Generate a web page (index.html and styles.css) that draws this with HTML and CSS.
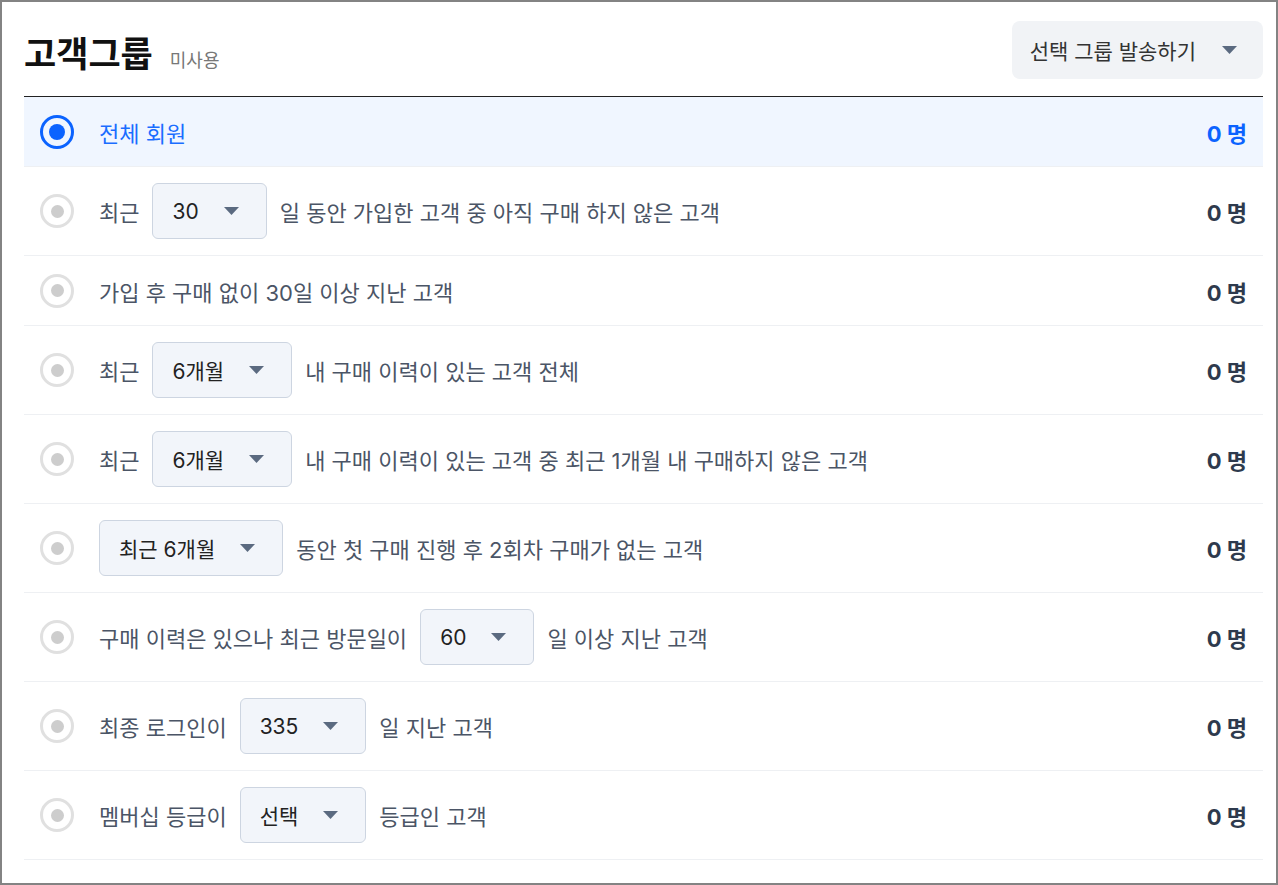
FILE: index.html
```html
<!DOCTYPE html>
<html lang="ko">
<head>
  <meta charset="utf-8">
  <title>고객그룹</title>
  <link rel="stylesheet" href="styles.css">
</head>
<body>
  <div class="frame">
    <div class="header">
      <div class="title-wrap">
        <h1>고객그룹</h1>
        <span class="sub">미사용</span>
      </div>
      <button class="send-btn">
        선택 그룹 발송하기
        <svg class="caret" width="15" height="8" viewBox="0 0 15 8"><path d="M0 0H15L7.5 8Z"/></svg>
      </button>
    </div>

    <ul class="group-list">
      <li class="group-row active">
        <span class="radio"></span>
        <div class="cond">전체 회원</div>
        <span class="count">0 명</span>
      </li>
      <li class="group-row">
        <span class="radio"></span>
        <div class="cond">
          최근
          <span class="select">30 <svg class="caret" width="15" height="8" viewBox="0 0 15 8"><path d="M0 0H15L7.5 8Z"/></svg></span>
          일 동안 가입한 고객 중 아직 구매 하지 않은 고객
        </div>
        <span class="count">0 명</span>
      </li>
      <li class="group-row">
        <span class="radio"></span>
        <div class="cond">가입 후 구매 없이 30일 이상 지난 고객</div>
        <span class="count">0 명</span>
      </li>
      <li class="group-row">
        <span class="radio"></span>
        <div class="cond">
          최근
          <span class="select">6개월 <svg class="caret" width="15" height="8" viewBox="0 0 15 8"><path d="M0 0H15L7.5 8Z"/></svg></span>
          내 구매 이력이 있는 고객 전체
        </div>
        <span class="count">0 명</span>
      </li>
      <li class="group-row">
        <span class="radio"></span>
        <div class="cond">
          최근
          <span class="select">6개월 <svg class="caret" width="15" height="8" viewBox="0 0 15 8"><path d="M0 0H15L7.5 8Z"/></svg></span>
          내 구매 이력이 있는 고객 중 최근 1개월 내 구매하지 않은 고객
        </div>
        <span class="count">0 명</span>
      </li>
      <li class="group-row">
        <span class="radio"></span>
        <div class="cond">
          <span class="select">최근 6개월 <svg class="caret" width="15" height="8" viewBox="0 0 15 8"><path d="M0 0H15L7.5 8Z"/></svg></span>
          동안 첫 구매 진행 후 2회차 구매가 없는 고객
        </div>
        <span class="count">0 명</span>
      </li>
      <li class="group-row">
        <span class="radio"></span>
        <div class="cond">
          구매 이력은 있으나 최근 방문일이
          <span class="select">60 <svg class="caret" width="15" height="8" viewBox="0 0 15 8"><path d="M0 0H15L7.5 8Z"/></svg></span>
          일 이상 지난 고객
        </div>
        <span class="count">0 명</span>
      </li>
      <li class="group-row">
        <span class="radio"></span>
        <div class="cond">
          최종 로그인이
          <span class="select">335 <svg class="caret" width="15" height="8" viewBox="0 0 15 8"><path d="M0 0H15L7.5 8Z"/></svg></span>
          일 지난 고객
        </div>
        <span class="count">0 명</span>
      </li>
      <li class="group-row">
        <span class="radio"></span>
        <div class="cond">
          멤버십 등급이
          <span class="select">선택 <svg class="caret" width="15" height="8" viewBox="0 0 15 8"><path d="M0 0H15L7.5 8Z"/></svg></span>
          등급인 고객
        </div>
        <span class="count">0 명</span>
      </li>
    </ul>
  </div>
</body>
</html>
```

FILE: styles.css
```css
* {
  box-sizing: border-box;
}
body {
  margin: 0;
  font-family: "Inter", "Noto Sans CJK KR", sans-serif;
  background: #fff;
}
.frame {
  height: 885px;
  border: 2px solid #838383;
  padding: 19px 13px 0 22px;
  overflow: hidden;
}
.header {
  display: flex;
  justify-content: space-between;
  align-items: center;
  padding-bottom: 17px;
  border-bottom: 1px solid #222;
}
.title-wrap {
  display: flex;
  align-items: baseline;
  gap: 17px;
  padding-top: 2px;
}
.title-wrap h1 {
  margin: 0;
  font-size: 35px;
  font-weight: 700;
  color: #111;
}
.sub {
  font-size: 18px;
  color: #777;
}
.send-btn {
  display: flex;
  align-items: center;
  gap: 26px;
  height: 58px;
  padding: 0 26px 0 18px;
  border: none;
  border-radius: 8px;
  background: #f1f3f6;
  font-family: inherit;
  font-size: 21px;
  color: #333;
  cursor: pointer;
}
.caret {
  fill: #5b6a80;
  flex: none;
}
.group-list {
  list-style: none;
  margin: 0;
  padding: 0;
}
.group-row {
  display: flex;
  align-items: center;
  min-height: 70px;
  padding: 16px 16px;
  border-bottom: 1px solid #eef0f3;
}
.group-row.active {
  background: #f0f6ff;
}
.radio {
  flex: none;
  width: 34px;
  height: 34px;
  border: 3px solid #e0e0e0;
  border-radius: 50%;
  display: flex;
  align-items: center;
  justify-content: center;
  margin-right: 25px;
}
.radio::after {
  content: "";
  width: 13px;
  height: 13px;
  border-radius: 50%;
  background: #cdcdcd;
}
.active .radio {
  border: 3.5px solid #0b63ff;
}
.active .radio::after {
  width: 16px;
  height: 16px;
  background: #0b63ff;
}
.cond {
  flex: 1;
  display: flex;
  align-items: center;
  gap: 13px;
  font-size: 22px;
  color: #4b5566;
}
.active .cond {
  color: #1a6dff;
}
.select {
  display: inline-flex;
  align-items: center;
  gap: 25px;
  height: 56px;
  padding: 0 27px 0 19px;
  border: 1px solid #cdd5e1;
  border-radius: 6px;
  background: #f2f5fa;
  color: #222;
  font-size: 21px;
}
.count {
  flex: none;
  font-size: 22px;
  font-weight: 700;
  color: #2e3a4d;
}
.active .count {
  color: #0b63ff;
}
```
